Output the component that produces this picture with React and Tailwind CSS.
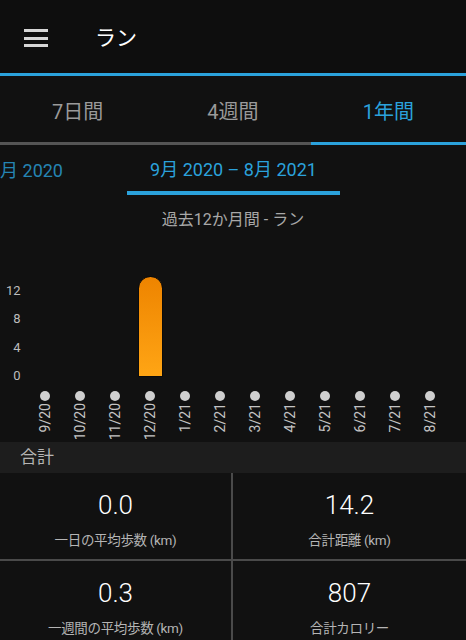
import React from 'react';

const months = ['9/20', '10/20', '11/20', '12/20', '1/21', '2/21', '3/21', '4/21', '5/21', '6/21', '7/21', '8/21'];
const values = [0, 0, 0, 14.2, 0, 0, 0, 0, 0, 0, 0, 0];

const stats = [
  { value: '0.0', label: '一日の平均歩数 (km)' },
  { value: '14.2', label: '合計距離 (km)' },
  { value: '0.3', label: '一週間の平均歩数 (km)' },
  { value: '807', label: '合計カロリー' },
];

const font = { fontFamily: 'Roboto, "Noto Sans CJK JP", sans-serif' };

const App = () => {
  return (
    <div className="w-[466px] h-[640px] overflow-hidden bg-[#111111] text-white" style={font}>
      {/* Top bar */}
      <header className="h-[73px] flex items-center pt-[3px] bg-[#0e0e0e]">
        <button className="ml-6 w-6 h-6 flex flex-col justify-between py-[3px]" aria-label="menu">
          <span className="block h-[3px] w-6 bg-[#d6d6d6]" />
          <span className="block h-[3px] w-6 bg-[#d6d6d6]" />
          <span className="block h-[3px] w-6 bg-[#d6d6d6]" />
        </button>
        <h1 className="ml-[47px] text-[21px] leading-none">ラン</h1>
      </header>
      <div className="h-[3px] bg-[#2ba2dc]" />

      {/* Period tabs */}
      <div className="h-[66px] grid grid-cols-3 pt-[5px] text-[20px]">
        <div className="flex items-center justify-center text-[#9a9a9a]">7日間</div>
        <div className="flex items-center justify-center text-[#9a9a9a]">4週間</div>
        <div className="flex items-center justify-center text-[#2ba2dc]">1年間</div>
      </div>
      <div className="h-[3px] grid grid-cols-3 bg-[#555555]">
        <div />
        <div />
        <div className="bg-[#2ba2dc]" />
      </div>

      {/* Date range carousel */}
      <div className="h-[50px] flex overflow-hidden text-[18px] text-[#2ba2dc]">
        <div className="shrink-0 w-[190px] -ml-[127px] pt-[14px] text-right leading-6 opacity-80 whitespace-nowrap">9月 2019 – 8月 2020</div>
        <div className="shrink-0 w-[213px] ml-[64px] flex flex-col items-center">
          <div className="pt-[13px] leading-6 whitespace-nowrap">9月 2020 – 8月 2021</div>
          <div className="mt-[9px] h-[4px] w-full bg-[#2ba2dc]" />
        </div>
      </div>

      <div className="h-[81px] pt-[15px] text-center text-[16px] leading-5 text-[#a8a8a8]">過去12か月間 - ラン</div>

      {/* Chart */}
      <div className="h-[166px] flex overflow-hidden">
        <div className="w-[27.5px] shrink-0 flex flex-col">
          {['12', '8', '4', '0'].map((t) => (
            <div key={t} className="h-[28.5px] flex items-center justify-end pr-[7px] text-[13px] text-[#bdbdbd]">{t}</div>
          ))}
        </div>
        {months.map((m, i) => (
          <div key={m} className="w-[35px] shrink-0 flex flex-col items-center">
            <div className="h-[101px] w-full flex items-end justify-center">
              {values[i] > 0 && (
                <div
                  className="w-[25px] rounded-t-full border border-[#0a0a0a] bg-gradient-to-b from-[#ee8400] to-[#ffa514]"
                  style={{ height: `${(values[i] / 14.2) * 101}px` }}
                />
              )}
            </div>
            <div className="mt-[14px] w-[10px] h-[10px] rounded-full bg-[#cfcfcf]" />
            <div className="mt-[2px] [writing-mode:vertical-rl] rotate-180 text-[14px] leading-none text-[#c4c4c4] whitespace-nowrap">{m}</div>
          </div>
        ))}
      </div>

      {/* Totals */}
      <div className="h-[31px] bg-[#1d1d1d] flex items-center pl-5 text-[17px] text-[#b5b5b5]">合計</div>
      <div className="grid grid-cols-2">
        {stats.map((s, i) => (
          <div
            key={s.label}
            className={`h-[88px] flex flex-col items-center ${i % 2 === 0 ? 'border-r-[2px] border-[#4a4a4a]' : ''} ${i < 2 ? 'border-b-[2px] border-b-[#4a4a4a]' : ''}`}
          >
            <div className="mt-[17px] text-[26px] leading-[30px] font-light text-white">{s.value}</div>
            <div className="mt-[10px] text-[13.5px] leading-5 text-[#b5b5b5] tracking-tight">{s.label}</div>
          </div>
        ))}
      </div>
    </div>
  );
};

export default App;
